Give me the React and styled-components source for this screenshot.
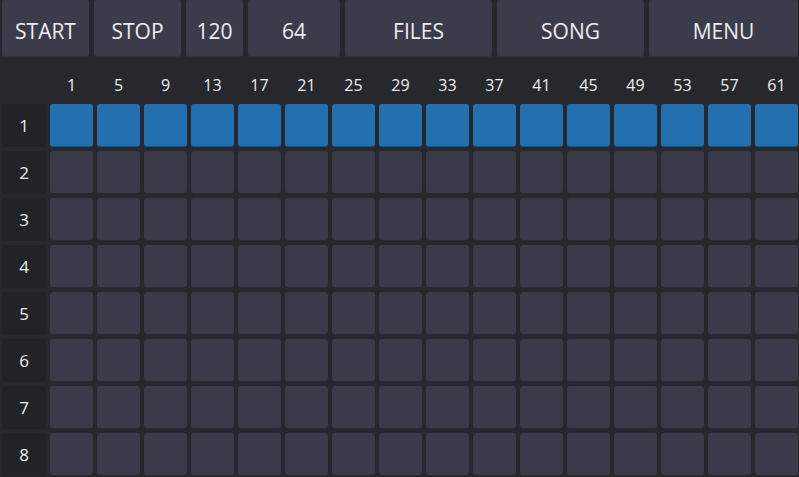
import React from "react";
import styled, { createGlobalStyle } from "styled-components";

const GlobalStyle = createGlobalStyle`
  html, body {
    margin: 0;
    padding: 0;
    background: #27282e;
    overflow: hidden;
  }
  body {
    font-family: "Open Sans", "Noto Sans", sans-serif;
    color: #ececf0;
  }
`;

const Page = styled.div`
  width: 799px;
  height: 477px;
  background: #27282e;
  display: flex;
  flex-direction: column;
`;

const Toolbar = styled.div`
  display: flex;
  gap: 5px;
  padding: 0 1px 0 2px;
  height: 57px;
`;

const ToolButton = styled.button`
  width: ${(p) => p.w}px;
  flex: ${(p) => (p.grow ? "1" : "none")};
  height: 57px;
  margin: 0;
  padding: 4px 0 0;
  border: none;
  border-radius: 2px;
  background: #3c3b4a;
  box-shadow: inset 0 -1px 0 rgba(0, 0, 0, 0.25);
  color: #ececf0;
  font-family: "Open Sans", "Noto Sans", sans-serif;
  font-size: 21px;
  display: flex;
  align-items: center;
  justify-content: center;
  cursor: pointer;
`;

const Grid = styled.div`
  display: grid;
  grid-template-columns: 44px repeat(16, 43px);
  grid-template-rows: 42px repeat(8, 43px);
  gap: 4px;
  padding: 1px 0 0 2px;
`;

const HeadCell = styled.div`
  display: flex;
  align-items: center;
  justify-content: center;
  padding-top: 12px;
  font-size: 16px;
`;

const RowLabel = styled.div`
  display: flex;
  align-items: center;
  justify-content: center;
  background: #222328;
  border-radius: 3px;
  font-size: 17px;
`;

const Step = styled.div`
  border-radius: 3px;
  background: ${(p) => (p.on ? "#2270b0" : "#3b3a48")};
  box-shadow: inset 0 -1px 0 rgba(0, 0, 0, 0.28);
`;

const buttons = [
  { label: "START", w: 87 },
  { label: "STOP", w: 87 },
  { label: "120", w: 57 },
  { label: "64", w: 92 },
  { label: "FILES", w: 147 },
  { label: "SONG", w: 147 },
  { label: "MENU", grow: true },
];

const columns = Array.from({ length: 16 }, (_, i) => i * 4 + 1);
const rows = [1, 2, 3, 4, 5, 6, 7, 8];

const App = () => {
  return (
    <Page>
      <GlobalStyle />
      <Toolbar>
        {buttons.map((b) => (
          <ToolButton key={b.label} w={b.w} grow={b.grow ? 1 : 0}>
            {b.label}
          </ToolButton>
        ))}
      </Toolbar>
      <Grid>
        <div />
        {columns.map((c) => (
          <HeadCell key={c}>{c}</HeadCell>
        ))}
        {rows.map((r) => (
          <React.Fragment key={r}>
            <RowLabel>{r}</RowLabel>
            {columns.map((c) => (
              <Step key={c} on={r === 1 ? 1 : 0} />
            ))}
          </React.Fragment>
        ))}
      </Grid>
    </Page>
  );
};

export default App;
